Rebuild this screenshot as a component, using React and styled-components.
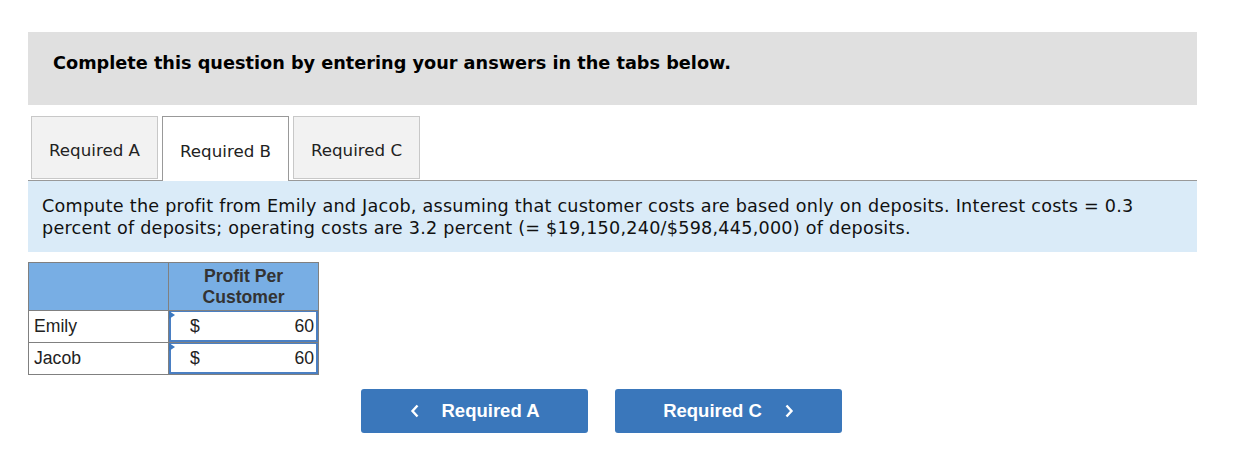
import React from "react";
import styled, { createGlobalStyle } from "styled-components";

const Global = createGlobalStyle`
  html, body { margin: 0; padding: 0; background: #fff; }
  body { font-family: "DejaVu Sans", Verdana, sans-serif; color: #000; }
`;

const Page = styled.div`
  padding: 32px 50px 0 28px;
  width: 1169px;
`;

const Header = styled.div`
  background: #e0e0e0;
  height: 73px;
  padding: 20px 0 0 25px;
  box-sizing: border-box;
  font-weight: bold;
  font-size: 17.7px;
  line-height: 22px;
`;

const TabBar = styled.div`
  margin-top: 11px;
  display: flex;
  gap: 4px;
  padding-left: 3px;
  border-bottom: 1px solid #999;
  height: 64px;
`;

const Tab = styled.div`
  width: 127px;
  height: ${(p) => (p.$active ? "65px" : "63px")};
  box-sizing: border-box;
  display: flex;
  align-items: center;
  justify-content: center;
  padding-top: 4px;
  font-size: 16.7px;
  color: #222;
  background: ${(p) => (p.$active ? "#fff" : "#f2f2f2")};
  border: 1px solid ${(p) => (p.$active ? "#999" : "#c8c8c8")};
  border-bottom: ${(p) => (p.$active ? "none" : "1px solid #c8c8c8")};
  position: relative;
  z-index: 1;
`;

const Instructions = styled.div`
  background: #daebf8;
  height: 71px;
  box-sizing: border-box;
  padding: 14px 14px 0 14px;
  font-size: 17.6px;
  letter-spacing: 0.24px;
  line-height: 22px;
  color: #111;
`;

const Table = styled.table`
  margin-top: 10px;
  border-collapse: collapse;
  font-family: "Liberation Sans", Arial, sans-serif;
  font-size: 17.6px;
  color: #222;
`;

const HeadCell = styled.th`
  background: #78aee4;
  border: 1px solid #808080;
  height: 48px;
  width: ${(p) => p.$w}px;
  padding: 0;
  font-weight: bold;
  line-height: 21px;
  text-align: center;
  color: #333;
  box-sizing: border-box;
`;

const NameCell = styled.td`
  border: 1px solid #808080;
  height: 31px;
  padding: 0 0 0 5px;
  box-sizing: border-box;
`;

const InputCell = styled.td`
  border: 1px solid #808080;
  padding: 0;
  height: 31px;
  position: relative;
`;

const InputBox = styled.div`
  margin: 0;
  height: 31px;
  box-sizing: border-box;
  border: 2px solid #4a7fc3;
  border-top-width: 1px;
  display: flex;
  align-items: center;
  justify-content: space-between;
  padding: 0 2px 0 19px;
  position: relative;
  &::before {
    content: "";
    position: absolute;
    left: -2px;
    top: -1px;
    border-top: 4px solid transparent;
    border-bottom: 4px solid transparent;
    border-left: 6px solid #3b78c0;
  }
`;

const Buttons = styled.div`
  margin-top: 14px;
  margin-left: 333px;
  display: flex;
  gap: 27px;
`;

const NavButton = styled.button`
  width: 227px;
  height: 44px;
  background: #3a77bb;
  border: none;
  border-radius: 3px;
  color: #fff;
  font-family: "Liberation Sans", Arial, sans-serif;
  font-weight: bold;
  font-size: 18.5px;
  display: flex;
  align-items: center;
  justify-content: center;
  gap: 22px;
  padding: 0;
`;

const Chevron = ({ dir }) => (
  <svg width="10" height="14" viewBox="0 0 10 14">
    <path
      d={dir === "left" ? "M7.5 1.5 L2.5 7 L7.5 12.5" : "M2.5 1.5 L7.5 7 L2.5 12.5"}
      fill="none"
      stroke="#fff"
      strokeWidth="2.4"
    />
  </svg>
);

const rows = [
  { name: "Emily", value: 60 },
  { name: "Jacob", value: 60 },
];

export default function App() {
  return (
    <>
      <Global />
      <Page>
        <Header>Complete this question by entering your answers in the tabs below.</Header>
        <TabBar>
          <Tab>Required A</Tab>
          <Tab $active>Required B</Tab>
          <Tab>Required C</Tab>
        </TabBar>
        <Instructions>
          Compute the profit from Emily and Jacob, assuming that customer costs are based only on deposits. Interest costs = 0.3
          <br />
          percent of deposits; operating costs are 3.2 percent (= $19,150,240/$598,445,000) of deposits.
        </Instructions>
        <Table>
          <thead>
            <tr>
              <HeadCell $w={140}></HeadCell>
              <HeadCell $w={150}>
                Profit Per
                <br />
                Customer
              </HeadCell>
            </tr>
          </thead>
          <tbody>
            {rows.map((r) => (
              <tr key={r.name}>
                <NameCell>{r.name}</NameCell>
                <InputCell>
                  <InputBox>
                    <span>$</span>
                    <span>{r.value}</span>
                  </InputBox>
                </InputCell>
              </tr>
            ))}
          </tbody>
        </Table>
        <Buttons>
          <NavButton>
            <Chevron dir="left" />
            <span>Required A</span>
          </NavButton>
          <NavButton>
            <span>Required C</span>
            <Chevron dir="right" />
          </NavButton>
        </Buttons>
      </Page>
    </>
  );
}
